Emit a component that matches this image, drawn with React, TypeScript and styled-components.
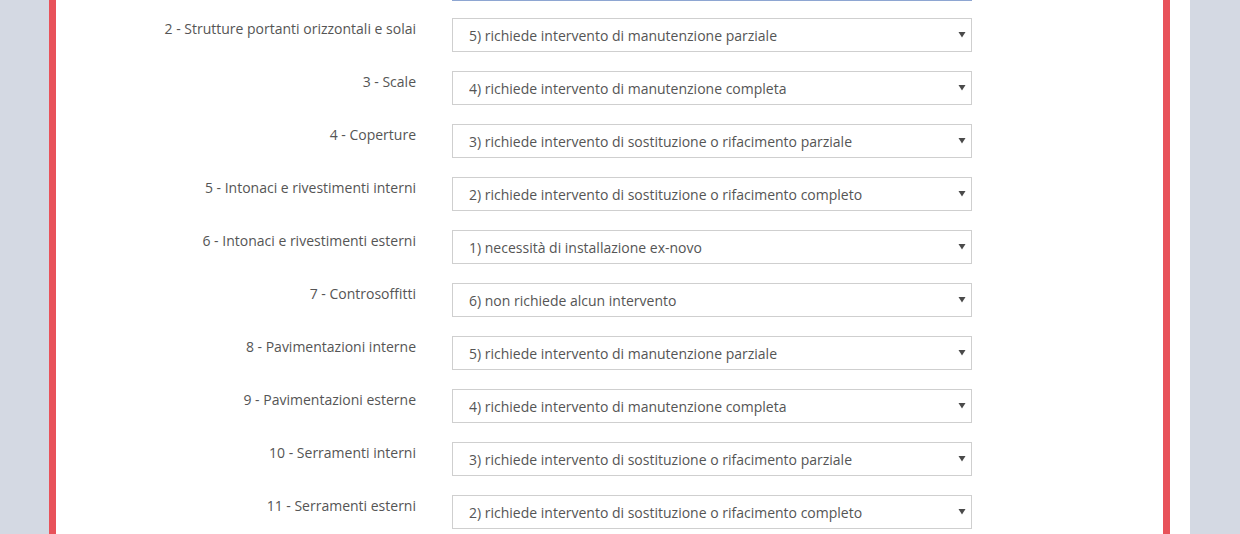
import React from 'react';
import styled, { createGlobalStyle } from 'styled-components';

const GlobalStyle = createGlobalStyle`
  html, body {
    margin: 0;
    padding: 0;
    background: #d4d9e3;
    height: 100%;
    overflow: hidden;
  }
  body {
    font-family: 'Open Sans', 'Liberation Sans', sans-serif;
  }
`;

const Wrapper = styled.div`
  margin-left: 49px;
  width: 1141px;
  height: 534px;
  background: #ffffff;
  overflow: hidden;
`;

const Panel = styled.div`
  display: flow-root;
  width: 1107px;
  height: 100%;
  border-left: 7px solid #e8525a;
  border-right: 7px solid #e8525a;
  background: #ffffff;
`;

const Form = styled.div`
  display: grid;
  grid-template-columns: 360px 520px;
  column-gap: 36px;
  row-gap: 19px;
  margin-top: -35px;
`;

const Label = styled.label`
  text-align: right;
  font-size: 14px;
  line-height: 20px;
  padding-top: 1px;
  color: #555555;
`;

const SelectWrap = styled.div`
  position: relative;
  height: 34px;
`;

const Select = styled.select<{ $focused?: boolean }>`
  appearance: none;
  -webkit-appearance: none;
  width: 100%;
  height: 34px;
  box-sizing: border-box;
  margin: 0;
  padding: 0 30px 0 16px;
  border: 1px solid ${p => (p.$focused ? '#8ea6d2' : '#cfcfcf')};
  box-shadow: ${p => (p.$focused ? '0 2px 0 #8ea6d2' : 'none')};
  border-radius: 0;
  background: #ffffff;
  font-family: 'Open Sans', 'Liberation Sans', sans-serif;
  font-size: 14px;
  color: #555555;
  outline: none;
`;

const Arrow = styled.svg`
  position: absolute;
  right: 6px;
  top: 13px;
  width: 8px;
  height: 7px;
  pointer-events: none;
`;

const options = [
  '1) necessità di installazione ex-novo',
  '2) richiede intervento di sostituzione o rifacimento completo',
  '3) richiede intervento di sostituzione o rifacimento parziale',
  '4) richiede intervento di manutenzione completa',
  '5) richiede intervento di manutenzione parziale',
  '6) non richiede alcun intervento',
];

const rows = [
  { label: '1 - Strutture portanti verticali', value: 5, focused: true },
  { label: '2 - Strutture portanti orizzontali e solai', value: 5 },
  { label: '3 - Scale', value: 4 },
  { label: '4 - Coperture', value: 3 },
  { label: '5 - Intonaci e rivestimenti interni', value: 2 },
  { label: '6 - Intonaci e rivestimenti esterni', value: 1 },
  { label: '7 - Controsoffitti', value: 6 },
  { label: '8 - Pavimentazioni interne', value: 5 },
  { label: '9 - Pavimentazioni esterne', value: 4 },
  { label: '10 - Serramenti interni', value: 3 },
  { label: '11 - Serramenti esterni', value: 2 },
];

const App: React.FC = () => {
  return (
    <>
      <GlobalStyle />
      <Wrapper>
        <Panel>
          <Form>
            {rows.map((row, i) => (
              <React.Fragment key={i}>
                <Label>{row.label}</Label>
                <SelectWrap>
                  <Select $focused={row.focused} defaultValue={String(row.value)}>
                    {options.map((o, j) => (
                      <option key={j} value={String(j + 1)}>{o}</option>
                    ))}
                  </Select>
                  <Arrow viewBox="0 0 8 7">
                    <path d="M0.5 1 L7.5 1 L4 6.5 Z" fill="#4a4a4a" />
                  </Arrow>
                </SelectWrap>
              </React.Fragment>
            ))}
          </Form>
        </Panel>
      </Wrapper>
    </>
  );
};

export default App;
